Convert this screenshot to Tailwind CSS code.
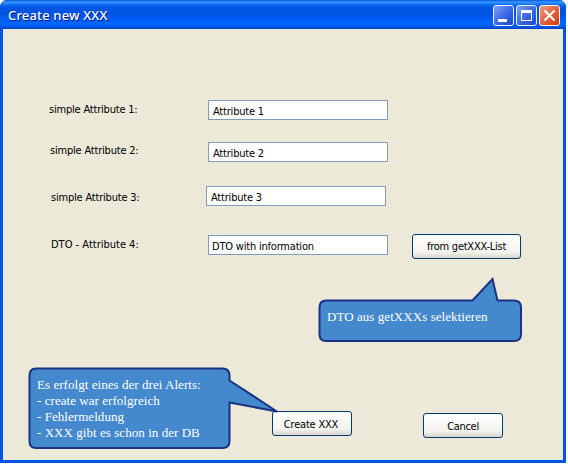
<!DOCTYPE html>
<html lang="de">
<head>
<meta charset="utf-8">
<title>Create new XXX</title>
<script src="https://cdn.jsdelivr.net/npm/@tailwindcss/browser@4"></script>
</head>
<body class="bg-white overflow-hidden">
<div class="relative w-[566px] h-[463px] flex flex-col bg-[#0054e3] rounded-t-[7px] overflow-hidden font-['DejaVu_Sans_Condensed','DejaVu_Sans',sans-serif] text-[11px] text-black">
  <header class="h-[29px] shrink-0 flex items-start justify-between pl-2 pr-[6px] pt-[5px] bg-[linear-gradient(to_bottom,#0058e0_0px,#3a93ff_2px,#288eff_3px,#0a66f0_5px,#0055e0_8px,#0054e3_14px,#005cf5_19px,#0066ff_24px,#005ef0_26px,#0040c4_29px)]">
    <h1 class="font-['Noto_Sans',sans-serif] font-medium text-white text-[13px] leading-[20px] whitespace-nowrap [text-shadow:1px_1px_0_#0a1883]"><span class="inline-block tracking-[0.16px]">Create new XXX</span></h1>
    <div class="flex gap-[2px]">
      <svg class="w-[21px] h-[21px]" viewBox="0 0 21 21"><defs><linearGradient id="b" x1="0" y1="0" x2="1" y2="1"><stop offset="0" stop-color="#85a6f4"/><stop offset=".5" stop-color="#3e6be4"/><stop offset="1" stop-color="#1745cf"/></linearGradient></defs><rect x=".5" y=".5" width="20" height="20" rx="2.5" fill="url(#b)" stroke="#e8f0ff"/><path d="M5 14h9v3H5z" fill="#fff"/></svg>
      <svg class="w-[21px] h-[21px]" viewBox="0 0 21 21"><rect x=".5" y=".5" width="20" height="20" rx="2.5" fill="url(#b)" stroke="#e8f0ff"/><path d="M5 5h11v11H5zM6 8v7h9V8z" fill="#fff" fill-rule="evenodd"/></svg>
      <svg class="w-[21px] h-[21px]" viewBox="0 0 21 21"><defs><linearGradient id="r" x1="0" y1="0" x2="1" y2="1"><stop offset="0" stop-color="#f0a08a"/><stop offset=".5" stop-color="#e5633e"/><stop offset="1" stop-color="#d03a0a"/></linearGradient></defs><rect x=".5" y=".5" width="20" height="20" rx="2.5" fill="url(#r)" stroke="#fff0ea"/><path d="M5.500 5.500l10 10M15.500 5.500l-10 10" stroke="#fff" stroke-width="2.2"/></svg>
    </div>
  </header>
  <main class="flex-1 mx-[3px] mb-[3px] bg-[#ece9d8] pt-[71px] whitespace-nowrap">
    <div class="flex h-5 pl-[46px]">
      <label class="w-[159px] leading-[20px]"><span class="inline-block tracking-[-0.2px]">simple Attribute 1:</span></label>
      <div class="w-[180px] h-5 border border-[#7f9db9] bg-white pl-1 leading-[22px] tracking-[-0.2px]">Attribute 1</div>
    </div>
    <div class="flex h-5 pl-[47px] mt-[22px]">
      <label class="w-[158px] leading-[18px]"><span class="inline-block tracking-[-0.2px]">simple Attribute 2:</span></label>
      <div class="w-[180px] h-5 border border-[#7f9db9] bg-white pl-1 leading-[22px] tracking-[-0.2px]">Attribute 2</div>
    </div>
    <div class="flex h-5 pl-[48px] mt-[24px]">
      <label class="w-[155px] leading-[24px]"><span class="inline-block tracking-[-0.2px]">simple Attribute 3:</span></label>
      <div class="w-[180px] h-5 border border-[#7f9db9] bg-white pl-1 leading-[22px] tracking-[-0.2px]">Attribute 3</div>
    </div>
    <div class="flex h-[25px] pl-[48px] mt-[28px]">
      <label class="w-[157px] leading-[22px]"><span class="inline-block">DTO - Attribute 4:</span></label>
      <div class="w-[180px] h-5 mt-px border border-[#7f9db9] bg-white pl-[3px] leading-[22px] tracking-[-0.2px]">DTO with information</div>
      <button class="ml-6 w-[109px] h-[25px] rounded-[3px] border border-[#003c74] bg-linear-to-b from-white via-[#f4f3ee] via-75% to-[#d9d3c9] leading-[23px] tracking-[-0.25px]">from getXXX-List</button>
    </div>
    <div class="flex pl-[269px] mt-[152px]">
      <button class="w-20 h-[25px] rounded-[3px] border border-[#003c74] bg-linear-to-b from-white via-[#f4f3ee] via-75% to-[#d9d3c9] pt-[2px] pr-[2px] leading-[21px] tracking-[-0.2px]">Create XXX</button>
      <button class="ml-[71px] mt-[2px] w-20 h-[25px] rounded-[3px] border border-[#003c74] bg-linear-to-b from-white via-[#f4f3ee] via-75% to-[#d9d3c9] pt-[2px] leading-[21px] tracking-[-0.3px]">Cancel</button>
    </div>
  </main>
  <div class="absolute left-[318px] top-[276px] w-[205px] h-[67px] text-white font-['Liberation_Serif',serif] text-[13px] leading-4 whitespace-nowrap">
    <svg class="absolute inset-0" width="205" height="67" viewBox="0 0 205 67"><path d="M8 24.500H154.500L174.500 3L179.500 24.500H196Q203 24.500 203 31.500V58Q203 65 196 65H8Q1.500 65 1.500 58V31.500Q1.500 24.500 8 24.500Z" fill="#4488ce" stroke="#1b3284" stroke-width="2"/></svg>
    <p class="relative pl-[9px] pt-[33px] tracking-[0.06px]"><span class="inline-block">DTO aus getXXXs selektieren</span></p>
  </div>
  <div class="absolute left-[28px] top-[366px] w-[252px] h-[84px] text-white font-['Liberation_Serif',serif] text-[13px] leading-4 whitespace-nowrap">
    <svg class="absolute inset-0" width="252" height="84" viewBox="0 0 252 84"><path d="M8 2.500H194.500Q201.500 2.500 201.500 9.500V14.500L249 45.500L201.500 36.500V75Q201.500 82 194.500 82H8Q1.500 82 1.500 75V9.500Q1.500 2.500 8 2.500Z" fill="#4488ce" stroke="#1b3284" stroke-width="2"/></svg>
    <div class="relative pl-[9px] pt-[11px] tracking-[0.05px]">
      <p><span class="inline-block">Es erfolgt eines der drei Alerts:</span></p>
      <p><span class="inline-block">- create war erfolgreich</span></p>
      <p><span class="inline-block">- Fehlermeldung</span></p>
      <p><span class="inline-block">- XXX gibt es schon in der DB</span></p>
    </div>
  </div>
</div>
</body>
</html>
